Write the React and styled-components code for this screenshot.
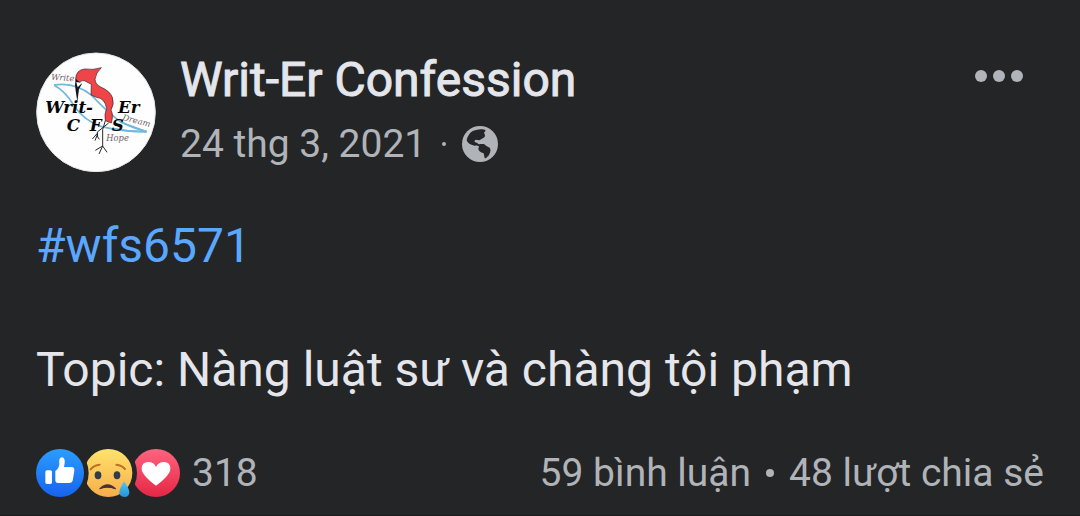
import React from "react";
import styled, { createGlobalStyle } from "styled-components";

const Global = createGlobalStyle`
  * { box-sizing: border-box; }
  body { margin: 0; background: #242526; font-family: Roboto, "Noto Sans", sans-serif; color: #e4e6eb; }
`;

const Post = styled.article`
  padding: 52px 36px 18px;
  background: #242526;
  border-bottom: 1px solid #1f1a1c;
`;

const Header = styled.header`
  display: flex;
  align-items: flex-start;
  gap: 24px;
`;

const AvatarLink = styled.a`
  display: block;
  width: 120px;
  height: 120px;
  flex: none;
  svg { display: block; width: 100%; height: 100%; }
`;

const Meta = styled.div`
  flex: 1;
  min-width: 0;
`;

const Name = styled.h1`
  margin: 0;
  font-size: 48px;
  line-height: 56px;
  font-weight: 400;
  -webkit-text-stroke: 1px currentColor;
  a { color: inherit; text-decoration: none; }
`;

const DateRow = styled.div`
  display: flex;
  align-items: center;
  gap: 16px;
  margin-top: 12px;
  color: #b0b3b8;
  font-size: 39px;
  line-height: 48px;
  svg { width: 36px; height: 36px; }
`;

const Dot = styled.span`
  width: 4px;
  height: 4px;
  border-radius: 50%;
  background: currentColor;
`;

const MenuButton = styled.button`
  display: flex;
  gap: 6px;
  margin: 18px 21px 0 0;
  padding: 0;
  border: 0;
  background: none;
  color: #b0b3b8;
  i { width: 12px; height: 12px; border-radius: 50%; background: currentColor; }
`;

const Body = styled.div`
  margin-top: 43px;
  font-size: 48px;
  line-height: 62px;
  p { margin: 0 0 62px; }
  p:last-child { margin: 0; }
`;

const Hashtag = styled.a`
  color: #5aa7ff;
  text-decoration: none;
`;

const Footer = styled.footer`
  display: flex;
  align-items: center;
  justify-content: space-between;
  margin-top: 48px;
  color: #b0b3b8;
  font-size: 39px;
  line-height: 48px;
`;

const PlainButton = styled.button`
  display: flex;
  align-items: center;
  gap: 12px;
  padding: 0;
  border: 0;
  background: none;
  color: inherit;
  font: inherit;
  svg { display: block; width: 144px; height: 48px; }
`;

const Counts = styled.div`
  display: flex;
  align-items: center;
  gap: 15px;
`;

const Bullet = styled.span`
  width: 8px;
  height: 8px;
  border-radius: 50%;
  background: currentColor;
`;

const Logo = () => (
  <svg viewBox="18 22 360 360" aria-hidden="true">
    <circle cx="198" cy="203" r="178" fill="#fefefe" stroke="#e6e7ea" strokeWidth="3" />
    <g fill="none" stroke="#6fb9dd" strokeWidth="5">
      <path d="M72 121 Q135 111 185 152 Q235 205 270 230 Q300 248 350 261" />
      <path d="M72 121 Q108 142 130 180 Q162 228 215 246 Q280 262 350 261" />
      <path d="M270 232 Q310 246 350 261 Q300 262 250 252" />
    </g>
    <g fontFamily="DejaVu Serif, serif" fontStyle="italic" fontSize="25" fill="#6e6265">
      <text x="63" y="105" transform="rotate(4 63 105)">Write</text>
      <text x="276" y="226" transform="rotate(14 276 226)">Dream</text>
      <text x="229" y="289">Hope</text>
    </g>
    <path d="M137 102 Q138 76 164 73 Q190 77 214 69 Q197 84 195 104 Q196 119 212 127 Q240 139 247 158 Q254 178 243 196 Q251 211 244 235 L226 228 Q222 207 230 192 Q225 160 199 158 L183 151 L184 119 L163 108 Q149 106 143 122 Z" fill="#ed4548" stroke="#3a1c20" strokeWidth="2" />
    <path d="M137 102 Q133 122 137 138 L142 171 L147 133 L156 117 Q145 110 137 102Z" fill="#151515" />
    <path d="M139 112l4 16 13-13z" fill="#fff" />
    <g fill="none" stroke="#2b2b2b" strokeWidth="3">
      <path d="M226 228 L218 255 L218 304 M218 304 L196 317 M218 304 L207 328 M218 304 L231 323" />
      <path d="M236 235 L202 262 L203 277 M203 265 L187 283 M203 267 L195 288 M203 277 L208 284" />
    </g>
    <g fontFamily="DejaVu Serif, serif" fontStyle="italic" fontWeight="bold" fontSize="50" fill="#050505">
      <text x="46" y="206">Writ-</text>
      <text x="264" y="206">Er</text>
      <text x="110" y="260">C</text>
      <text x="179" y="260">F</text>
      <text x="245" y="260">S</text>
    </g>
  </svg>
);

const Globe = () => (
  <svg viewBox="0 0 108 108" role="img" aria-label="Công khai">
    <circle cx="54" cy="54" r="54" fill="#b0b3b8" />
    <path d="M14 42 Q18 22 34 14 Q50 8 62 10 Q70 11 71 14 L66 20 Q71 27 68 33 L60 38 L52 43 L41 41 Q36 43 38 48 L46 51 Q50 57 54 54 L66 54 Q74 62 83 65 Q88 71 84 80 Q80 91 75 93 Q71 99 68 96 L65 82 Q50 77 49 68 L51 61 Q46 57 38 59 Q16 54 14 42Z" fill="#242526" />
  </svg>
);

const Reactions = () => (
  <svg viewBox="0 0 432 144" role="img" aria-label="Thích, Buồn, Yêu thích">
    <defs>
      <linearGradient id="like" x2="0" y2="1"><stop stopColor="#2b9dff" /><stop offset="1" stopColor="#1763ee" /></linearGradient>
      <linearGradient id="sad" x2="0" y2="1"><stop stopColor="#ffe36b" /><stop offset="1" stopColor="#f6ad4b" /></linearGradient>
      <linearGradient id="love" x2="0" y2="1"><stop stopColor="#ff6480" /><stop offset="1" stopColor="#e42744" /></linearGradient>
      <linearGradient id="tear" x2="0" y2="1"><stop stopColor="#50c8f4" /><stop offset="1" stopColor="#2392dc" /></linearGradient>
    </defs>
    <circle cx="360" cy="72" r="72" fill="url(#love)" />
    <path d="M360 110 Q317 78 317 59 Q317 39 337 39 Q354 39 360 54 Q367 39 384 39 Q403 39 403 59 Q403 78 360 110Z" fill="#fff" />
    <circle cx="217" cy="72" r="86" fill="#242526" />
    <circle cx="217" cy="72" r="72" fill="url(#sad)" />
    <g fill="none" stroke="#ba7224" strokeWidth="6" strokeLinecap="round">
      <path d="M164 61 Q174 48 191 47" /><path d="M241 47 Q258 49 267 60" />
    </g>
    <ellipse cx="186" cy="79" rx="10" ry="12" fill="#343c49" />
    <ellipse cx="243" cy="79" rx="10" ry="12" fill="#343c49" />
    <path d="M192 119 Q214 97 238 119 Q214 110 192 119Z" fill="#493137" stroke="#493137" strokeWidth="4" strokeLinejoin="round" />
    <path d="M264 97 Q280 120 280 130 Q280 144 265 144 Q250 143 250 130 Q251 118 264 97Z" fill="url(#tear)" />
    <circle cx="72" cy="72" r="86" fill="#242526" />
    <circle cx="72" cy="72" r="72" fill="url(#like)" />
    <rect x="28" y="64" width="20" height="41" rx="5" fill="#fff" />
    <path d="M58 66 Q70 57 70 44 Q68 27 76 25 Q88 25 86 42 L84 54 H107 Q116 55 115 65 L110 95 Q108 102 99 102 H66 Q59 102 58 95Z" fill="#fff" />
  </svg>
);

export default function App() {
  return (
    <>
      <Global />
      <Post>
        <Header>
          <AvatarLink href="#page" aria-label="Writ-Er Confession"><Logo /></AvatarLink>
          <Meta>
            <Name><a href="#page">Writ-Er Confession</a></Name>
            <DateRow><time dateTime="2021-03-24">24 thg 3, 2021</time><Dot /><Globe /></DateRow>
          </Meta>
          <MenuButton type="button" aria-label="Tùy chọn"><i /><i /><i /></MenuButton>
        </Header>
        <Body>
          <p><Hashtag href="#wfs6571">#wfs6571</Hashtag></p>
          <p>Topic: Nàng luật sư và chàng tội phạm</p>
        </Body>
        <Footer>
          <PlainButton type="button"><Reactions />318</PlainButton>
          <Counts>
            <PlainButton type="button">59 bình luận</PlainButton>
            <Bullet />
            <PlainButton type="button">48 lượt chia sẻ</PlainButton>
          </Counts>
        </Footer>
      </Post>
    </>
  );
}
